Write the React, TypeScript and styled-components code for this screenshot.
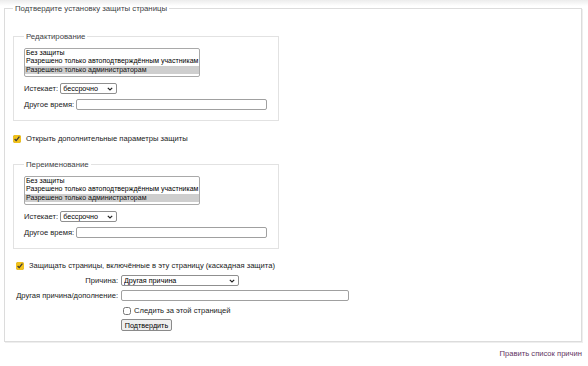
import React from 'react';
import styled, { createGlobalStyle } from 'styled-components';

const GlobalStyle = createGlobalStyle`
  html, body {
    margin: 0;
    padding: 0;
    background: #fff;
  }
  body {
    font-family: "Liberation Sans", Arial, sans-serif;
    font-size: 7.6px;
    color: #202122;
  }
`;

const Page = styled.div`
  width: 588px;
  height: 366px;
  box-sizing: border-box;
  padding: 4px 6px 0 4px;
  background: linear-gradient(#ececec 0, #ffffff 6px);
`;

const OuterSet = styled.fieldset`
  margin: 0;
  padding: 19px 8px 10px 8px;
  border: 1px solid #dcdcdc;
  box-shadow: 1px 1px 0 #eeeeee;
`;

const Legend = styled.legend`
  padding: 0 2px;
  font-size: 7.8px;
  line-height: 9px;
  color: #404244;
`;

const InnerSet = styled.fieldset<{ $top?: number }>`
  width: 266px;
  box-sizing: border-box;
  margin: ${p => p.$top ?? 0}px 0 0 0;
  padding: 7px 9px 10px 10px;
  border: 1px solid #e2e2e2;
`;

const ListBox = styled.select`
  display: block;
  width: 176px;
  height: 29px;
  margin: 0;
  padding: 0;
  font-family: inherit;
  font-size: 7px;
  line-height: 9px;
  border: 1px solid #a9a9a9;
  overflow: hidden;
  color: #000;

  option {
    padding: 0 1px;
    line-height: 9px;
  }
`;

const Row = styled.div<{ $top?: number }>`
  display: flex;
  align-items: center;
  gap: 2px;
  margin-top: ${p => p.$top ?? 0}px;
  line-height: 9px;
  white-space: nowrap;
`;

const DropWrap = styled.span<{ $w: number }>`
  position: relative;
  display: inline-block;
  width: ${p => p.$w}px;
  height: 11px;
`;

const Drop = styled.select`
  appearance: none;
  width: 100%;
  height: 100%;
  box-sizing: border-box;
  margin: 0;
  padding: 0 0 0 2px;
  font-family: inherit;
  font-size: 7.2px;
  color: #000;
  background: #fff;
  border: 1px solid #8f8f8f;
  border-radius: 2px;
`;

const Chevron = styled.svg`
  position: absolute;
  right: 4px;
  top: 3.5px;
  width: 6px;
  height: 4px;
  pointer-events: none;
`;

const TextInput = styled.input<{ $w: number }>`
  width: ${p => p.$w}px;
  height: 11px;
  box-sizing: border-box;
  margin: 0;
  padding: 0 2px;
  font-family: inherit;
  font-size: 7px;
  border: 1px solid #a0a0a0;
  border-radius: 2px;
  background: #fff;
`;

const Check = styled.input.attrs({ type: 'checkbox' })<{ $left?: number }>`
  width: 8px;
  height: 8px;
  margin: 0 3px 0 ${p => p.$left ?? 0}px;
  accent-color: #f2c21b;
`;

const ReasonGrid = styled.div`
  display: grid;
  grid-template-columns: 105px auto;
  column-gap: 3px;
  margin-top: 5px;
  line-height: 9px;
`;

const Label = styled.label<{ $row: number; $top?: number }>`
  grid-column: 1;
  grid-row: ${p => p.$row};
  justify-self: end;
  white-space: nowrap;
  align-self: center;
  margin-top: ${p => p.$top ?? 0}px;
`;

const Cell = styled.div<{ $row: number; $top?: number }>`
  grid-column: 2;
  grid-row: ${p => p.$row};
  display: flex;
  align-items: center;
  margin-top: ${p => p.$top ?? 0}px;
`;

const Button = styled.button`
  height: 12px;
  width: 51px;
  padding: 0;
  margin: 0;
  font-family: inherit;
  font-size: 7.2px;
  color: #000;
  background: #efefef;
  border: 1px solid #8a8a8a;
  border-radius: 2px;
`;

const Footer = styled.div`
  margin-top: 7px;
  text-align: right;
  line-height: 9px;
`;

const Link = styled.a`
  color: #5f3462;
  text-decoration: none;
`;

const levels = [
  'Без защиты',
  'Разрешено только автоподтверждённым участникам',
  'Разрешено только администраторам',
];

const Select: React.FC<{ w: number; value: string }> = ({ w, value }) => (
  <DropWrap $w={w}>
    <Drop defaultValue={value}>
      <option>{value}</option>
    </Drop>
    <Chevron viewBox="0 0 6 4">
      <path d="M0.8 0.8 L3 3 L5.2 0.8" fill="none" stroke="#222" strokeWidth="1.2" />
    </Chevron>
  </DropWrap>
);

const ProtectSet: React.FC<{ title: string; top?: number }> = ({ title, top }) => (
  <InnerSet $top={top}>
    <Legend>{title}</Legend>
    <ListBox size={3} defaultValue={levels[2]}>
      {levels.map(l => (
        <option key={l}>{l}</option>
      ))}
    </ListBox>
    <Row $top={6}>
      <span>Истекает:</span>
      <Select w={57} value="бессрочно" />
    </Row>
    <Row $top={5}>
      <span>Другое время:</span>
      <TextInput $w={191} />
    </Row>
  </InnerSet>
);

export default function App() {
  return (
    <Page>
      <GlobalStyle />
      <OuterSet>
        <Legend>Подтвердите установку защиты страницы</Legend>
        <ProtectSet title="Редактирование" />
        <Row $top={13}>
          <Check defaultChecked $left={0} />
          <span>Открыть дополнительные параметры защиты</span>
        </Row>
        <ProtectSet title="Переименование" top={17} />
        <Row $top={12}>
          <Check defaultChecked $left={3} />
          <span>Защищать страницы, включённые в эту страницу (каскадная защита)</span>
        </Row>
        <ReasonGrid>
          <Label $row={1}>Причина:</Label>
          <Cell $row={1}>
            <Select w={118} value="Другая причина" />
          </Cell>
          <Label $row={2} $top={4}>Другая причина/дополнение:</Label>
          <Cell $row={2} $top={4}>
            <TextInput $w={228} />
          </Cell>
          <Cell $row={3} $top={5}>
            <Check $left={2} />
            <span>Следить за этой страницей</span>
          </Cell>
          <Cell $row={4} $top={4}>
            <Button>Подтвердить</Button>
          </Cell>
        </ReasonGrid>
      </OuterSet>
      <Footer>
        <Link href="#">Править список причин</Link>
      </Footer>
    </Page>
  );
}
